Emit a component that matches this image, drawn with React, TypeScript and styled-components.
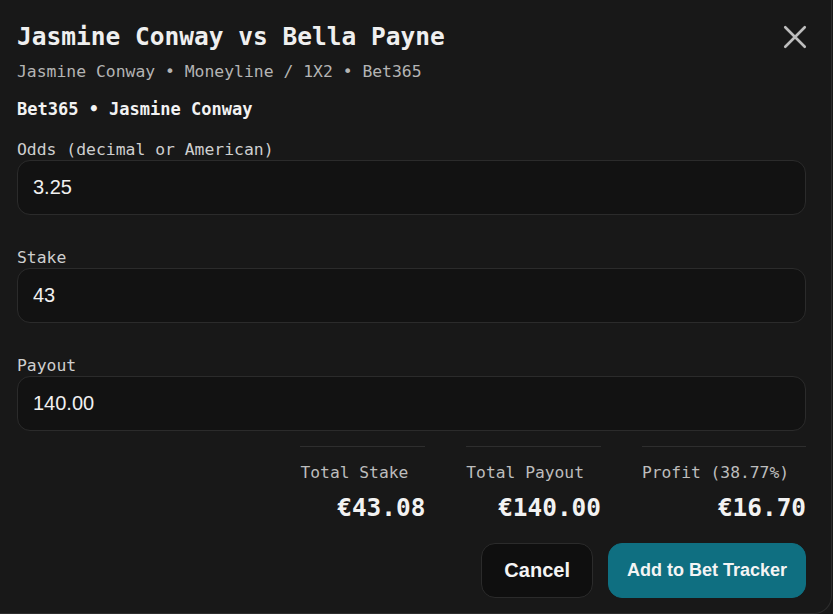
import styled, { createGlobalStyle } from 'styled-components';

const GlobalStyle = createGlobalStyle`
  html, body {
    margin: 0;
    padding: 0;
    background: #181818;
    overflow: hidden;
  }
  * {
    box-sizing: border-box;
  }
`;

const Dialog = styled.div`
  width: 832px;
  height: 614px;
  padding: 22px 25px 0 17px;
  background: #181818;
  border-right: 1px solid #2c2c2c;
  border-bottom: 1px solid #2c2c2c;
  border-bottom-right-radius: 18px;
  color: #ececec;
  font-family: 'DejaVu Sans Mono', monospace;
`;

const Header = styled.div`
  display: flex;
  justify-content: space-between;
  align-items: flex-start;
`;

const Title = styled.h2`
  margin: 0;
  font-size: 24.5px;
  line-height: 30px;
  font-weight: 700;
  color: #efefef;
`;

const CloseButton = styled.button`
  display: flex;
  align-items: center;
  justify-content: center;
  width: 30px;
  height: 30px;
  margin: 0 -4px 0 0;
  padding: 0;
  border: none;
  background: transparent;
  color: #bdbdbd;
  cursor: pointer;
`;

const Subtitle = styled.div`
  margin-top: 9px;
  font-size: 16.4px;
  line-height: 22px;
  color: #b4b4b4;
`;

const Selection = styled.div`
  margin-top: 15px;
  font-size: 17px;
  line-height: 22px;
  font-weight: 700;
  color: #f2f2f2;
`;

const Form = styled.div`
  display: flex;
  flex-direction: column;
  gap: 33px;
  margin-top: 20px;
`;

const Field = styled.label`
  display: flex;
  flex-direction: column;
`;

const Label = styled.span`
  font-size: 16.4px;
  line-height: 20px;
  color: #cfcfcf;
`;

const Input = styled.input`
  width: 100%;
  height: 55px;
  padding: 0 15px;
  background: #121212;
  border: 1px solid #2b2b2b;
  border-radius: 13px;
  color: #f0f0f0;
  font-family: 'Liberation Sans', Arial, sans-serif;
  font-size: 20px;
  outline: none;
`;

const Summary = styled.div`
  display: flex;
  justify-content: flex-end;
  gap: 41px;
  margin-top: 15px;
`;

const Stat = styled.div`
  display: flex;
  flex-direction: column;
  border-top: 1px solid #2e2e2e;
  padding-top: 15px;
`;

const StatLabel = styled.span`
  padding-right: 17px;
  font-size: 16.3px;
  line-height: 22px;
  color: #bdbdbd;
`;

const StatValue = styled.span`
  margin-top: 10px;
  text-align: right;
  font-size: 24.4px;
  line-height: 28px;
  font-weight: 700;
  color: #f2f2f2;
`;

const Actions = styled.div`
  display: flex;
  justify-content: flex-end;
  gap: 15px;
  margin-top: 21px;
`;

const Button = styled.button<{ $primary?: boolean }>`
  height: 55px;
  padding: 0 ${p => (p.$primary ? '18px' : '22px')};
  border-radius: 14px;
  border: 1px solid ${p => (p.$primary ? '#0f6f81' : '#2b2b2b')};
  background: ${p => (p.$primary ? '#0f6f81' : '#0f0f0f')};
  color: #f4f4f4;
  font-family: 'Liberation Sans', Arial, sans-serif;
  font-size: ${p => (p.$primary ? '18px' : '20px')};
  font-weight: 700;
  cursor: pointer;
`;

const stats = [
  { label: 'Total Stake', value: '€43.08' },
  { label: 'Total Payout', value: '€140.00' },
  { label: 'Profit (38.77%)', value: '€16.70' },
];

const fields = [
  { label: 'Odds (decimal or American)', value: '3.25' },
  { label: 'Stake', value: '43' },
  { label: 'Payout', value: '140.00' },
];

export default function App() {
  return (
    <>
      <GlobalStyle />
      <Dialog>
        <Header>
          <Title>Jasmine Conway vs Bella Payne</Title>
          <CloseButton aria-label="Close">
            <svg width="26" height="26" viewBox="0 0 24 24" fill="none" stroke="currentColor" strokeWidth="2.4" strokeLinecap="round">
              <path d="M3 3l18 18M21 3L3 21" />
            </svg>
          </CloseButton>
        </Header>
        <Subtitle>Jasmine Conway • Moneyline / 1X2 • Bet365</Subtitle>
        <Selection>Bet365 • Jasmine Conway</Selection>
        <Form>
          {fields.map(f => (
            <Field key={f.label}>
              <Label>{f.label}</Label>
              <Input defaultValue={f.value} />
            </Field>
          ))}
        </Form>
        <Summary>
          {stats.map(s => (
            <Stat key={s.label}>
              <StatLabel>{s.label}</StatLabel>
              <StatValue>{s.value}</StatValue>
            </Stat>
          ))}
        </Summary>
        <Actions>
          <Button>Cancel</Button>
          <Button $primary>Add to Bet Tracker</Button>
        </Actions>
      </Dialog>
    </>
  );
}
